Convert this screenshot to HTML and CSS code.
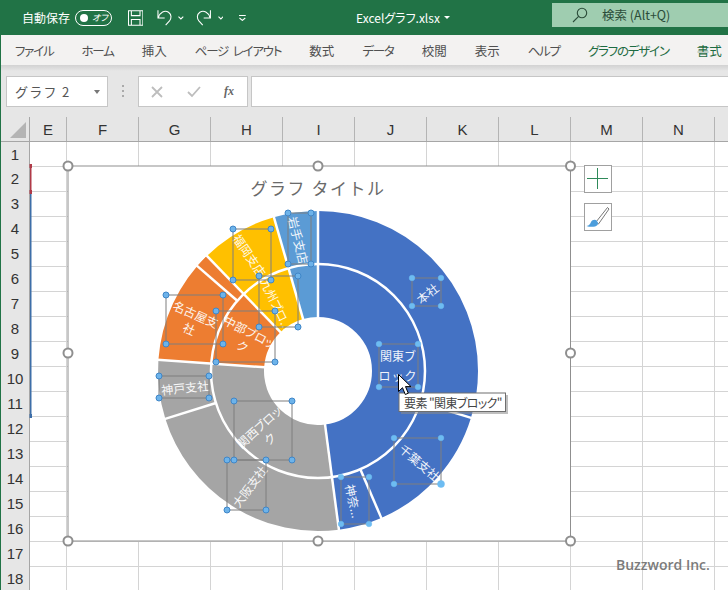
FILE: index.html
```html
<!DOCTYPE html>
<html lang="ja">
<head>
<meta charset="utf-8">
<title>Excelグラフ.xlsx</title>
<link rel="stylesheet" href="styles.css">
</head>
<body>
<div class="app">
  <header class="titlebar">
    <span class="autosave">自動保存</span>
    <span class="toggle"><i class="knob"></i><em>オフ</em></span>
    <svg class="qa save" width="16" height="16" viewBox="0 0 16 16"><path d="M.5.5h15v15H.5zM3.5.5v5h9v-5M3.500 15.500v-6h9v6" /></svg>
    <svg class="qa undo" width="16" height="17" viewBox="0 0 16 17"><path d="M1 1v8h7M1.500 8.500C3 3 8 .5 12 3c3.500 2.500 3 6.500 1 9l-4 4.500" /></svg>
    <svg class="chev" width="6" height="4" viewBox="0 0 6 4"><path d="M.5.500 3 3 5.500.5" /></svg>
    <svg class="qa redo" width="16" height="17" viewBox="0 0 16 17"><path d="M15 1v8H8M14.500 8.500C13 3 8 .5 4 3 .5 5.500 1 9.500 3 12l4 4.500" /></svg>
    <svg class="chev" width="6" height="4" viewBox="0 0 6 4"><path d="M.5.500 3 3 5.500.5" /></svg>
    <svg class="more" width="7" height="6" viewBox="0 0 7 6"><path d="M0 .5h7M.5 3 3.500 5.500 6.500 3" /></svg>
    <span class="filename">Excelグラフ.xlsx</span>
    <span class="caret"></span>
    <div class="search">
      <svg width="16" height="16" viewBox="0 0 16 16"><circle cx="10" cy="6" r="4.700" /><path d="M6.600 9.400 1 15" /></svg>
      <span>検索 (Alt+Q)</span>
    </div>
  </header>

  <nav class="tabs">
    <span class="kana">ファイル</span><span class="kana">ホーム</span><span>挿入</span><span class="kana">ページ レイアウト</span><span>数式</span><span class="kana">データ</span><span>校閲</span><span>表示</span><span class="kana">ヘルプ</span><span class="kana ctx">グラフのデザイン</span><span class="ctx">書式</span>
  </nav>

  <section class="formula">
    <div class="namebox"><span>グラフ 2</span><i class="nb-caret"></i></div>
    <div class="grip"><i></i><i></i><i></i></div>
    <div class="fx-box">
      <svg width="12" height="12" viewBox="0 0 12 12"><path class="fx-x" d="M1 1l10 10M11 1 1 11" /></svg>
      <svg width="14" height="12" viewBox="0 0 14 12"><path class="fx-x" d="M1 6l4 4 8-9" /></svg>
      <span class="fx">fx</span>
    </div>
    <div class="input"></div>
  </section>

  <div class="colhead">
    <div class="corner"><i></i></div>
    <span class="col narrow">E</span><span class="col">F</span><span class="col">G</span><span class="col">H</span><span class="col">I</span><span class="col">J</span><span class="col">K</span><span class="col">L</span><span class="col">M</span><span class="col">N</span><span class="col"></span>
  </div>

  <div class="sheet">
    <div class="rowhead">
      <span>1</span><span>2</span><span>3</span><span>4</span><span>5</span><span>6</span><span>7</span><span>8</span><span>9</span><span>10</span><span>11</span><span>12</span><span>13</span><span>14</span><span>15</span><span>16</span><span>17</span><span>18</span>
    </div>
    <div class="cells"></div>
  </div>

  <svg class="overlay" width="728" height="590" viewBox="0 0 728 590">
    <!-- range markers -->
    <rect class="m-red" x="30" y="166" width="1.500" height="27" />
    <rect class="m-red" x="29.500" y="164" width="2.500" height="4" />
    <rect class="m-red" x="29.500" y="190" width="2.500" height="4" />
    <rect class="m-blue" x="30" y="194" width="1.500" height="222" />
    <rect class="m-blue" x="29.500" y="414" width="2.500" height="4" />

    <!-- chart -->
    <rect class="chart" x="68" y="166" width="502.500" height="375" />
    <text class="title" x="318" y="187">グラフ タイトル</text>

    <g class="ring outer">
      <circle class="blue"   cx="318" cy="371" r="133.500" pathLength="360" stroke-dasharray="107 360"   transform="rotate(-90 318 371)" />
      <circle class="blue"   cx="318" cy="371" r="133.500" pathLength="360" stroke-dasharray="49.700 360" transform="rotate(17 318 371)" />
      <circle class="blue"   cx="318" cy="371" r="133.500" pathLength="360" stroke-dasharray="15.800 360" transform="rotate(66.700 318 371)" />
      <circle class="grey"   cx="318" cy="371" r="133.500" pathLength="360" stroke-dasharray="80.100 360" transform="rotate(82.500 318 371)" />
      <circle class="grey"   cx="318" cy="371" r="133.500" pathLength="360" stroke-dasharray="21.400 360" transform="rotate(162.600 318 371)" />
      <circle class="orange" cx="318" cy="371" r="133.500" pathLength="360" stroke-dasharray="42 360"    transform="rotate(184 318 371)" />
      <circle class="orange" cx="318" cy="371" r="133.500" pathLength="360" stroke-dasharray="5 360"     transform="rotate(221 318 371)" />
      <circle class="yellow" cx="318" cy="371" r="133.500" pathLength="360" stroke-dasharray="28 360"    transform="rotate(226 318 371)" />
      <circle class="sky"    cx="318" cy="371" r="133.500" pathLength="360" stroke-dasharray="16 360"    transform="rotate(254 318 371)" />
    </g>
    <g class="ring inner">
      <circle class="blue"   cx="318" cy="371" r="80.500" pathLength="360" stroke-dasharray="172.500 360" transform="rotate(-90 318 371)" />
      <circle class="grey"   cx="318" cy="371" r="80.500" pathLength="360" stroke-dasharray="101.500 360" transform="rotate(82.500 318 371)" />
      <circle class="orange" cx="318" cy="371" r="80.500" pathLength="360" stroke-dasharray="42 360"     transform="rotate(184 318 371)" />
      <circle class="yellow" cx="318" cy="371" r="80.500" pathLength="360" stroke-dasharray="28 360"     transform="rotate(226 318 371)" />
      <circle class="sky"    cx="318" cy="371" r="80.500" pathLength="360" stroke-dasharray="16 360"     transform="rotate(254 318 371)" />
    </g>
    <g class="seams">
      <circle cx="318" cy="371" r="107" />
      <line x1="318" y1="318" x2="318" y2="210" />
      <line x1="318" y1="318" x2="318" y2="210" transform="rotate(172.500 318 371)" />
      <line x1="318" y1="318" x2="318" y2="210" transform="rotate(274 318 371)" />
      <line x1="318" y1="318" x2="318" y2="210" transform="rotate(316 318 371)" />
      <line x1="318" y1="318" x2="318" y2="210" transform="rotate(344 318 371)" />
      <line x1="318" y1="264" x2="318" y2="210" transform="rotate(107 318 371)" />
      <line x1="318" y1="264" x2="318" y2="210" transform="rotate(156.700 318 371)" />
      <line x1="318" y1="264" x2="318" y2="210" transform="rotate(252.600 318 371)" />
      <line x1="318" y1="264" x2="318" y2="210" transform="rotate(311 318 371)" />
    </g>

    <!-- data labels -->
    <g class="labels">
      <text x="427" y="293" transform="rotate(-38 427 293)">本社</text>
      <text transform="translate(398 365)"><tspan x="0" y="-10">関東ブ</tspan><tspan class="wide" x="0" y="10">ロック</tspan></text>
      <text x="420" y="462" transform="rotate(40 420 462)">千葉支社</text>
      <text x="354" y="501" transform="rotate(78 354 501)">神奈...</text>
      <text x="249" y="486" transform="rotate(-53 249 486)">大阪支社</text>
      <text class="prop" transform="translate(263.500 432) rotate(-42)"><tspan x="0" y="-8">関西ブロッ</tspan><tspan x="0" y="8">ク</tspan></text>
      <text x="185" y="387" transform="rotate(-6 185 387)">神戸支社</text>
      <text transform="translate(193 320.500) rotate(24)"><tspan x="0" y="-8">名古屋支</tspan><tspan x="0" y="8">社</tspan></text>
      <text class="prop" transform="translate(246.500 338) rotate(27)"><tspan x="0" y="-8">中部ブロッ</tspan><tspan x="0" y="8">ク</tspan></text>
      <text x="250" y="255" transform="rotate(56 250 255)">福岡支店</text>
      <text class="prop" x="277" y="304" transform="rotate(64 277 304)">九州ブロ...</text>
      <text x="299" y="240" transform="rotate(76 299 240)">岩手支店</text>
    </g>

    <!-- label boxes -->
    <g class="boxes">
      <rect x="412" y="278" width="29" height="28" /><rect x="379" y="344" width="39" height="43" />
      <rect x="394" y="438" width="47" height="46" /><rect x="341" y="477" width="28" height="47" />
      <rect x="227" y="460" width="39" height="50" /><rect x="234" y="401" width="58" height="59" />
      <rect x="159" y="376" width="50" height="22" /><rect x="166" y="295" width="57" height="49" />
      <rect x="216" y="311" width="59" height="51" /><rect x="233" y="229" width="38" height="51" />
      <rect x="259" y="276" width="39" height="51" /><rect x="288" y="213" width="23" height="51" />
    </g>
    <g class="dots light">
      <circle cx="412" cy="278" r="2.800" /><circle cx="441" cy="278" r="2.800" /><circle cx="412" cy="306" r="2.800" /><circle cx="441" cy="306" r="2.800" />
      <circle cx="379" cy="344" r="2.800" /><circle cx="418" cy="344" r="2.800" /><circle cx="379" cy="387" r="2.800" /><circle cx="418" cy="387" r="2.800" />
      <circle cx="394" cy="438" r="2.800" /><circle cx="441" cy="438" r="2.800" /><circle cx="394" cy="484" r="2.800" /><circle cx="441" cy="484" r="3.500" />
      <circle cx="341" cy="477" r="2.800" /><circle cx="369" cy="477" r="2.800" /><circle cx="341" cy="524" r="2.800" /><circle cx="369" cy="524" r="2.800" />
    </g>
    <g class="dots">
      <circle cx="227" cy="460" r="3" /><circle cx="266" cy="460" r="3" /><circle cx="227" cy="510" r="3" /><circle cx="266" cy="510" r="3" />
      <circle cx="234" cy="401" r="3" /><circle cx="292" cy="401" r="3" /><circle cx="234" cy="460" r="3" /><circle cx="292" cy="460" r="3" />
      <circle cx="159" cy="376" r="3" /><circle cx="209" cy="376" r="3" /><circle cx="159" cy="398" r="3" /><circle cx="209" cy="398" r="3" />
      <circle cx="166" cy="295" r="3" /><circle cx="223" cy="295" r="3" /><circle cx="166" cy="344" r="3" /><circle cx="223" cy="344" r="3" />
      <circle cx="216" cy="311" r="3" /><circle cx="275" cy="311" r="3" /><circle cx="216" cy="362" r="3" /><circle cx="275" cy="362" r="3" />
      <circle cx="233" cy="229" r="3" /><circle cx="271" cy="229" r="3" /><circle cx="233" cy="280" r="3" /><circle cx="271" cy="280" r="3" />
      <circle cx="259" cy="276" r="3" /><circle cx="298" cy="276" r="3" /><circle cx="259" cy="327" r="3" /><circle cx="298" cy="327" r="3" />
      <circle cx="288" cy="213" r="3" /><circle cx="311" cy="213" r="3" /><circle cx="288" cy="264" r="3" /><circle cx="311" cy="264" r="3" />
    </g>

    <!-- chart handles -->
    <g class="handles">
      <circle cx="68" cy="166" r="4.500" /><circle cx="318" cy="166" r="4.500" /><circle cx="570.500" cy="166" r="4.500" />
      <circle cx="68" cy="353" r="4.500" /><circle cx="570.500" cy="353" r="4.500" />
      <circle cx="68" cy="541" r="4.500" /><circle cx="318" cy="541" r="4.500" /><circle cx="570.500" cy="541" r="4.500" />
    </g>

    <!-- chart side buttons -->
    <rect class="sidebtn" x="584.500" y="165.500" width="27" height="27" />
    <path class="plus" d="M587 178.500h21M597.500 168v21" />
    <rect class="sidebtn" x="584.500" y="203.500" width="27" height="27" />
    <path class="brush-handle" d="M596 222l11.500-14.500 1.500 1.500-10.500 15z" />
    <path class="brush-tip" d="M586.500 226c3-.5 3.500-2 4.500-4 1-2 4-3 5.500-1.500s2 3 1 4.500c-1.500 2-7.500 2.500-11 1z" />

    <!-- tooltip -->
    <rect class="tip-shadow" x="401" y="395" width="107" height="19" />
    <rect class="tip" x="399" y="393" width="106.500" height="18.500" />
    <text class="tip-text" x="404" y="402">要素 "関東ブロック"</text>
    <path class="cursor" d="M398.500 374.500v17l4-3.800 2.800 6.800 3-1.300-2.800-6.600h5.500z" />

    <text class="mark" x="616" y="570">Buzzword Inc.</text>
  </svg>
</div>
</body>
</html>
```
FILE: styles.css
```css
* { box-sizing: border-box; }
html, body { margin: 0; padding: 0; }
body {
  width: 728px;
  height: 590px;
  overflow: hidden;
  background: #fff;
  font-family: "Noto Sans CJK JP", "Noto Sans", sans-serif;
}
.app { position: relative; width: 728px; height: 590px; overflow: hidden; border-left: 1px solid #217346; }

/* title bar */
.titlebar {
  height: 35px;
  margin-left: -1px;
  padding-left: 22px;
  display: flex;
  align-items: center;
  background: #217346;
  color: #fff;
  font-size: 12px;
}
.autosave { font-feature-settings: "palt"; width: 55px; }
.toggle {
  position: relative;
  width: 38px;
  height: 16px;
  border: 1px solid #fff;
  border-radius: 8px;
  display: flex;
  align-items: center;
  padding-left: 4px;
  gap: 4px;
}
.knob { width: 8px; height: 8px; border-radius: 50%; background: #fff; flex: none; }
.toggle em { font-size: 9px; font-style: italic; line-height: 1; font-feature-settings: "palt"; }
.titlebar svg path, .titlebar svg circle { fill: none; stroke: #fff; stroke-width: 1.100; }
.save { margin-left: 16px; }
.undo { margin-left: 14px; }
.chev { margin-left: 6px; }
.redo { margin-left: 12px; }
.more { margin-left: 16px; }
.filename { margin-left: 110px; font-feature-settings: "palt"; width: 83px; white-space: nowrap; }
.caret {
  margin-left: 5px;
  border-top: 3px solid #fff;
  border-left: 3px solid transparent;
  border-right: 3px solid transparent;
}
.search {
  margin-left: 102px;
  width: 176px;
  height: 24px;
  margin-top: -6px;
  background: #9fcdb0;
  color: #2b4c39;
  display: flex;
  align-items: center;
  padding-left: 20px;
  gap: 14px;
  font-size: 12.500px;
  font-feature-settings: "palt";
  flex: none;
}
.titlebar .search svg circle, .titlebar .search svg path { stroke: #2b4c39; }

/* tabs */
.tabs {
  height: 30px;
  margin-left: -1px;
  padding-left: 15px;
  display: flex;
  align-items: center;
  gap: 28px;
  background: #f3f2f1;
  color: #505050;
  font-size: 12.500px;
  font-feature-settings: "palt";
  word-spacing: 3px;
  white-space: nowrap;
}
.tabs .kana { letter-spacing: -1.200px; }
.tabs .ctx { color: #1d6b41; }

/* formula bar */
.formula {
  height: 52px;
  display: flex;
  align-items: flex-start;
  padding: 11px 0 0 5px;
  background: linear-gradient(#d2d2d2, #e6e6e6 6px);
}
.namebox {
  width: 102px;
  height: 31px;
  background: #fff;
  border: 1px solid #c6c6c6;
  display: flex;
  align-items: center;
  justify-content: space-between;
  padding: 0 7px 0 8px;
  font-size: 13px;
  letter-spacing: 1.300px;
  color: #555;
}
.nb-caret {
  border-top: 4px solid #777;
  border-left: 3.500px solid transparent;
  border-right: 3.500px solid transparent;
}
.grip { width: 30px; display: flex; flex-direction: column; align-items: center; gap: 3px; padding-top: 9px; }
.grip i { width: 2px; height: 2px; background: #aaa; }
.fx-box {
  width: 110px;
  height: 31px;
  background: #fff;
  border: 1px solid #c6c6c6;
  display: flex;
  align-items: center;
  gap: 24px;
  padding-left: 12px;
}
.fx-x { fill: none; stroke: #bdbdbd; stroke-width: 1.800; }
.fx { font: italic bold 12px "Liberation Serif", serif; color: #666; margin-left: -1px; }
.input { flex: 1; height: 31px; margin-left: 3px; background: #fff; border: 1px solid #c6c6c6; border-right: 0; }

/* column header */
.colhead {
  height: 25px;
  display: flex;
  background: #e6e6e6;
  border-bottom: 1px solid #a6a6a6;
  color: #333;
  font-size: 15px;
  font-family: "Liberation Sans", sans-serif;
}
.corner { width: 29px; flex: none; border-right: 1px solid #a6a6a6; position: relative; }
.corner i {
  position: absolute;
  left: 9px;
  bottom: 3px;
  border-bottom: 16px solid #b4b4b4;
  border-left: 16px solid transparent;
}
.col {
  width: 72px;
  flex: none;
  border-right: 1px solid #b4b4b4;
  display: flex;
  align-items: center;
  justify-content: center;
}
.col.narrow { width: 37px; }

/* sheet */
.sheet { display: flex; height: 448px; }
.rowhead {
  width: 29px;
  flex: none;
  background: #e6e6e6;
  border-right: 1px solid #a6a6a6;
  color: #333;
  font-family: "Liberation Sans", sans-serif;
  font-size: 15px;
}
.rowhead span {
  height: 25px;
  display: flex;
  align-items: center;
  justify-content: center;
}
.rowhead span:first-child { height: 24px; }
.cells {
  flex: 1;
  background-color: #fff;
  background-image:
    linear-gradient(90deg, #d4d4d4 1px, transparent 1px),
    linear-gradient(#d4d4d4 1px, transparent 1px);
  background-size: 72px 100%, 100% 25px;
  background-position: 36px 0, 0 24px;
}

/* overlay */
.overlay { position: absolute; left: -1px; top: 0; }
.m-red { fill: #b03a48; }
.m-blue { fill: #3d6ea8; }
.chart { fill: #fff; stroke: #8f8f8f; stroke-width: 1; }
.title {
  font-size: 17px;
  letter-spacing: 1.500px;
  fill: #6a6a6a;
  text-anchor: middle;
  dominant-baseline: central;
}
.ring circle { fill: none; stroke-width: 53; }
.ring .blue { stroke: #4472c4; }
.ring .grey { stroke: #a5a5a5; }
.ring .orange { stroke: #ed7d31; }
.ring .yellow { stroke: #ffc000; }
.ring .sky { stroke: #5b9bd5; }
.seams circle { fill: none; stroke: #fff; stroke-width: 2.500; }
.seams line { stroke: #fff; stroke-width: 2.500; }
.labels text {
  fill: #fff;
  font-size: 12px;
  text-anchor: middle;
  dominant-baseline: central;
  opacity: .92;
}
.labels .prop { font-feature-settings: "palt"; }
.labels .wide { letter-spacing: 1px; }
.boxes rect { fill: none; stroke: #7f7f7f; stroke-width: 1; }
.dots circle { fill: #6db3ea; stroke: #3f86c8; stroke-width: 1; }
.dots.light circle { fill: #6dbcf2; stroke: #6dbcf2; stroke-width: .5; }
.handles circle { fill: #fff; stroke: #8f8f8f; stroke-width: 2; }
.sidebtn { fill: #fff; stroke: #a0a0a0; stroke-width: 1; }
.plus { fill: none; stroke: #2f8a5a; stroke-width: 1; }
.brush-handle { fill: #fff; stroke: #555; stroke-width: .8; }
.brush-tip { fill: #4c9ddb; }
.tip-shadow { fill: #8a8a8a; opacity: .55; }
.tip { fill: #fff; stroke: #6e6e6e; stroke-width: 1; }
.tip-text { font-size: 12px; fill: #444; dominant-baseline: central; font-feature-settings: "palt"; letter-spacing: -.6px; }
.cursor { fill: #fff; stroke: #000; stroke-width: 1; }
.mark {
  font-family: "Open Sans", sans-serif;
  font-size: 14px;
  font-weight: 600;
  fill: #7b7b7b;
}
```
